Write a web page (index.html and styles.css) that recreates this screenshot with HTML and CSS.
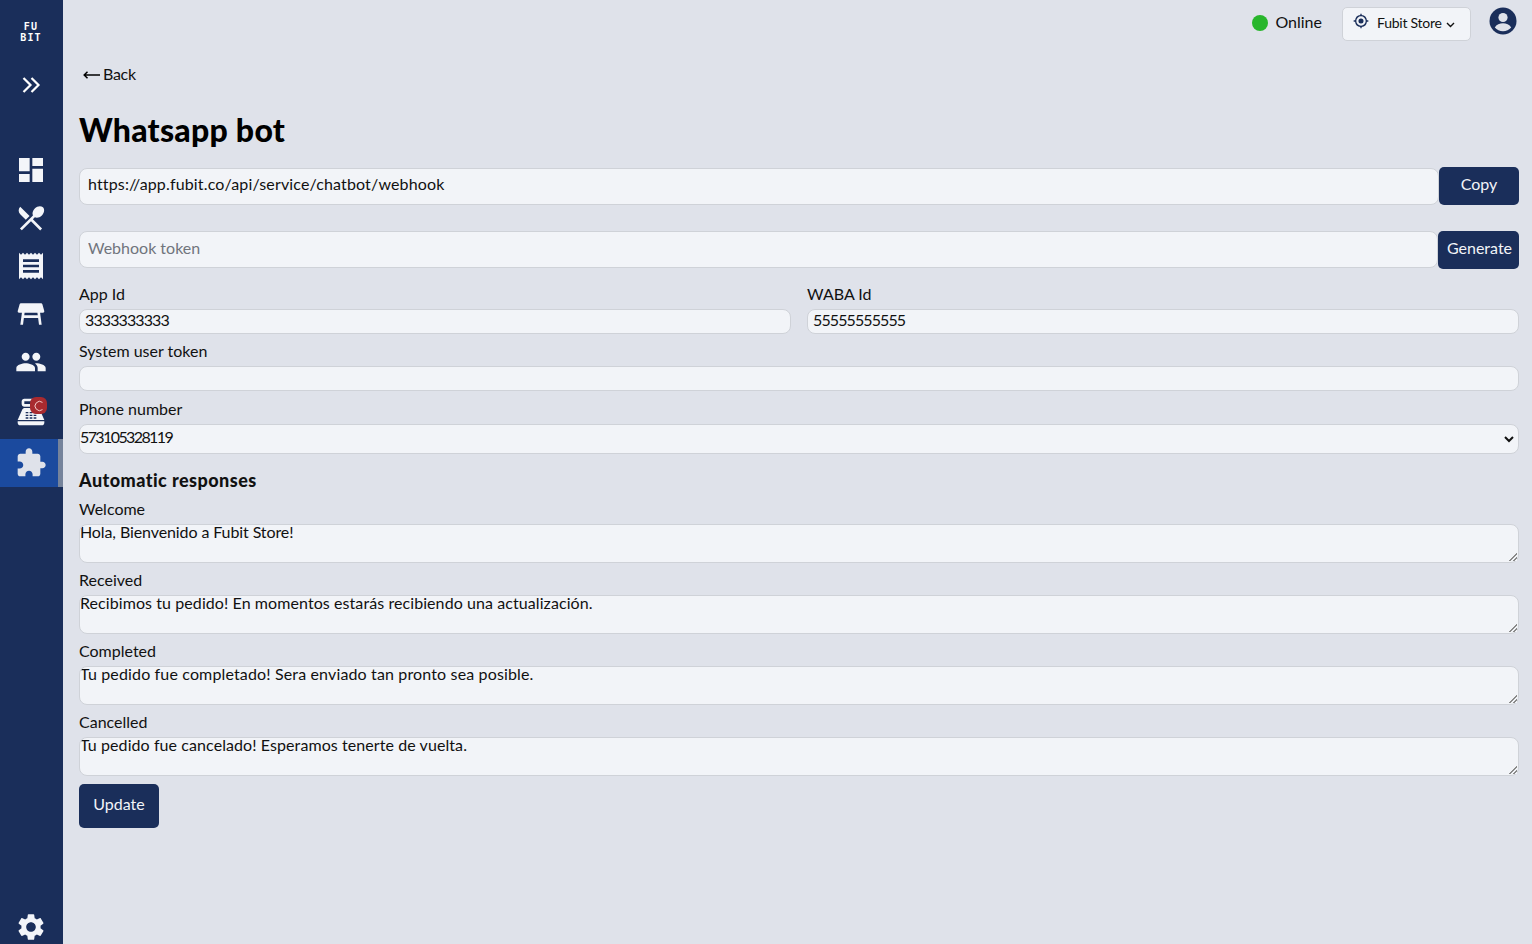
FILE: index.html
```html
<html>
    <head>
        <meta charset="utf-8">
        <title>Whatsapp bot</title>
        <link rel="stylesheet" href="styles.css">
    </head>
    <body>
        <div class="app">
            <nav class="sidebar">
                <div class="logo"><span>FU</span><span>BIT</span></div>
                <div class="expand">
                    <svg width="24" height="24" viewBox="0 0 24 24" fill="none" stroke="#fff" stroke-width="2.2"><path d="M4.5 5l7 7-7 7M12.5 5l7 7-7 7"/></svg>
                </div>
                <div class="menu">
                    <a class="item"><svg class="icon" viewBox="0 0 24 24"><path d="M3 13h8V3H3v10zm0 8h8v-6H3v6zm10 0h8V11h-8v10zm0-18v6h8V3h-8z"/></svg></a>
                    <a class="item"><svg class="icon" viewBox="0 0 24 24"><path d="M8.1 13.34l2.83-2.83L3.91 3.5c-1.56 1.56-1.56 4.09 0 5.66l4.19 4.18zm6.78-1.81c1.53.71 3.68.21 5.27-1.38 1.91-1.91 2.28-4.65.81-6.12-1.46-1.46-4.2-1.1-6.12.81-1.59 1.59-2.09 3.74-1.38 5.27L3.7 19.87l1.41 1.41L12 14.41l6.88 6.88 1.41-1.41L13.41 13l1.47-1.47z"/></svg></a>
                    <a class="item"><svg class="icon" viewBox="0 0 24 24"><path d="M18 17H6v-2h12v2zm0-4H6v-2h12v2zm0-4H6V7h12v2zM3 22l1.5-1.5L6 22l1.5-1.5L9 22l1.5-1.5L12 22l1.5-1.5L15 22l1.5-1.5L18 22l1.5-1.5L21 22V2l-1.5 1.5L18 2l-1.5 1.5L15 2l-1.5 1.5L12 2l-1.5 1.5L9 2 7.5 3.5 6 2 4.5 3.5 3 2v20z"/></svg></a>
                    <a class="item"><svg class="icon" viewBox="0 0 24 24"><path d="M21.96 9.73l-1.43-5C20.41 4.3 20.02 4 19.57 4H4.43c-.45 0-.84.3-.96.73l-1.43 5C1.86 10.36 2.34 11 3 11h2.2L4 20h2l.67-5h10.67l.66 5h2l-1.2-9H21c.66 0 1.14-.64.96-1.27zM6.93 13l.27-2h9.6l.27 2H6.93z"/></svg></a>
                    <a class="item"><svg class="icon" viewBox="0 0 24 24"><path d="M16 11c1.66 0 2.99-1.34 2.99-3S17.66 5 16 5c-1.66 0-3 1.34-3 3s1.34 3 3 3zm-8 0c1.66 0 2.99-1.34 2.99-3S9.66 5 8 5C6.34 5 5 6.34 5 8s1.34 3 3 3zm0 2c-2.33 0-7 1.17-7 3.5V19h14v-2.5c0-2.33-4.67-3.5-7-3.5zm8 0c-.29 0-.62.02-.97.05 1.16.84 1.97 1.97 1.97 3.45V19h6v-2.5c0-2.33-4.67-3.5-7-3.5z"/></svg></a>
                    <a class="item pos">
                        <svg class="icon" viewBox="0 0 24 24"><path fill-rule="evenodd" d="M17 2H7c-1.1 0-2 .9-2 2v2c0 1.1.9 2 2 2h10c1.1 0 2-.9 2-2V4c0-1.1-.9-2-2-2zm0 4H7V4h10v2zm3 16H4c-1.1 0-2-.9-2-2v-1h20v1c0 1.1-.9 2-2 2zm-1.47-11.81C18.21 9.47 17.49 9 16.7 9H7.3c-.79 0-1.51.47-1.83 1.19L2 18h20l-3.47-7.81zM8 12h2v1H8zm0 2h2v1H8zm0 2h2v1H8zm3-4h2v1h-2zm0 2h2v1h-2zm0 2h2v1h-2zm3-4h2v1h-2zm0 2h2v1h-2zm0 2h2v1h-2z"/></svg>
                        <span class="badge"><svg width="12" height="12" viewBox="0 0 12 12" fill="none" stroke="#f3c9c9" stroke-width="1"><path d="M9.5 2.4A4.6 4.6 0 1 0 9.5 9.6"/></svg></span>
                    </a>
                    <a class="item active"><svg class="icon" viewBox="0 0 24 24"><path d="M20.5 11H19V7c0-1.1-.9-2-2-2h-4V3.500C13 2.120 11.880 1 10.500 1S8 2.120 8 3.500V5H4c-1.100 0-1.990.9-1.990 2v3.800H3.500c1.490 0 2.700 1.210 2.700 2.700s-1.210 2.700-2.700 2.700H2V20c0 1.100.9 2 2 2h3.800v-1.500c0-1.490 1.210-2.700 2.700-2.700 1.490 0 2.700 1.210 2.700 2.700V22H17c1.100 0 2-.9 2-2v-4h1.500c1.380 0 2.500-1.120 2.500-2.500S21.880 11 20.500 11z"/></svg></a>
                </div>
                <a class="settings"><svg class="icon" viewBox="0 0 24 24"><path d="M19.14 12.94c.04-.3.06-.61.06-.94 0-.32-.02-.64-.07-.94l2.03-1.58c.18-.14.23-.41.12-.61l-1.92-3.32c-.12-.22-.37-.29-.59-.22l-2.39.96c-.5-.38-1.03-.7-1.62-.94l-.36-2.54c-.04-.24-.24-.41-.48-.41h-3.84c-.24 0-.43.17-.47.41l-.36 2.54c-.59.24-1.13.57-1.62.94l-2.39-.96c-.22-.08-.47 0-.59.22L2.74 8.87c-.12.21-.08.47.12.61l2.03 1.58c-.05.3-.09.63-.09.94s.02.64.07.94l-2.03 1.58c-.18.14-.23.41-.12.61l1.92 3.32c.12.22.37.29.59.22l2.39-.96c.5.38 1.03.7 1.62.94l.36 2.54c.05.24.24.41.48.41h3.84c.24 0 .44-.17.47-.41l.36-2.54c.59-.24 1.13-.56 1.62-.94l2.39.96c.22.08.47 0 .59-.22l1.92-3.32c.12-.22.07-.47-.12-.61l-2.01-1.58zM12 15.6c-1.98 0-3.6-1.62-3.6-3.6s1.62-3.6 3.6-3.6 3.6 1.62 3.6 3.6-1.62 3.6-3.6 3.6z"/></svg></a>
            </nav>

            <main class="main">
                <header class="topbar">
                    <span class="dot"></span>
                    <span class="status">Online</span>
                    <button class="store">
                        <svg class="target" width="16" height="16" viewBox="0 0 24 24" fill="#1a2e5a"><path d="M12 8.2a3.8 3.8 0 1 0 0 7.6 3.8 3.8 0 0 0 0-7.6zm8.9 2.8A9 9 0 0 0 13 3.1V1h-2v2.1A9 9 0 0 0 3.1 11H1v2h2.1a9 9 0 0 0 7.9 7.9V23h2v-2.1a9 9 0 0 0 7.9-7.9H23v-2h-2.1zM12 19a7 7 0 1 1 0-14 7 7 0 0 1 0 14z"/></svg>
                        <span class="store-name">Fubit Store</span>
                        <svg class="caret" width="9" height="6" viewBox="0 0 9 6" fill="none" stroke="#111" stroke-width="1.4"><path d="M1 1l3.5 3.5L8 1"/></svg>
                    </button>
                    <svg class="avatar" width="28" height="28" viewBox="0 0 28 28"><circle cx="14" cy="14" r="13.500" fill="#1a2e5a"/><circle cx="14" cy="10.500" r="4.600" fill="#dfe2ea"/><path d="M5.800 20.600c1.600-3 5-4.300 8.200-4.300s6.600 1.300 8.200 4.300c-2 2.300-5 3.700-8.200 3.700s-6.200-1.400-8.200-3.700z" fill="#dfe2ea"/></svg>
                </header>

                <a class="back">
                    <svg width="17" height="8" viewBox="0 0 17 8" fill="none" stroke="#000" stroke-width="1.500"><path d="M17 4H1.500M4.500 .8L1.200 4l3.300 3.200"/></svg>
                    Back
                </a>
                <h1>Whatsapp bot</h1>

                <div class="group first">
                    <input class="field tall url" value="https://app.fubit.co/api/service/chatbot/webhook">
                    <button class="btn copy">Copy</button>
                </div>
                <div class="group second">
                    <input class="field tall" placeholder="Webhook token">
                    <button class="btn generate">Generate</button>
                </div>

                <div class="cols">
                    <div>
                        <label>App Id</label>
                        <input class="field small digits" value="3333333333">
                    </div>
                    <div>
                        <label>WABA Id</label>
                        <input class="field small digits" value="55555555555">
                    </div>
                </div>

                <label>System user token</label>
                <input class="field small" value="">

                <label class="phone">Phone number</label>
                <select class="field pick"><option>573105328119</option></select>

                <h2>Automatic responses</h2>

                <label>Welcome</label>
                <textarea class="field area narrow">Hola, Bienvenido a Fubit Store!</textarea>
                <label>Received</label>
                <textarea class="field area">Recibimos tu pedido! En momentos estarás recibiendo una actualización.</textarea>
                <label>Completed</label>
                <textarea class="field area wide">Tu pedido fue completado! Sera enviado tan pronto sea posible.</textarea>
                <label>Cancelled</label>
                <textarea class="field area">Tu pedido fue cancelado! Esperamos tenerte de vuelta.</textarea>

                <button class="btn update">Update</button>
            </main>
        </div>
    </body>
</html>
```

FILE: styles.css
```css
* {
    box-sizing: border-box;
}

body {
    margin: 0;
    font-family: Lato, "Noto Sans", sans-serif;
    font-size: 16px;
    color: #111;
    background-color: #dfe2ea;
    overflow: hidden;
}

.app {
    display: flex;
    height: 944px;
}

/* Sidebar */
.sidebar {
    width: 63px;
    flex: none;
    display: flex;
    flex-direction: column;
    background-color: #1a2e5a;
}

.logo {
    height: 64px;
    display: flex;
    flex-direction: column;
    align-items: center;
    justify-content: center;
    padding-right: 1px;
    font-family: "DejaVu Sans Mono", monospace;
    font-size: 10px;
    font-weight: bold;
    line-height: 11px;
    letter-spacing: 1.2px;
    color: #fff;
}

.expand {
    height: 42px;
    display: flex;
    align-items: center;
    justify-content: center;
    padding-right: 2px;
}

.menu {
    margin-top: 40px;
}

.item {
    height: 48px;
    display: flex;
    align-items: center;
    justify-content: center;
    padding-right: 2px;
    position: relative;
}

.pos {
    padding-top: 3px;
}

.icon {
    width: 32px;
    height: 32px;
    fill: #f3f5f9;
}

.item.active {
    margin-top: 5px;
    background-color: #1b4a9e;
    border-right: 5px solid #75839b;
    padding: 0 0 0 4px;
}

.item.active .icon {
    fill: #dfe2ea;
}

.badge {
    position: absolute;
    top: 11px;
    left: 30px;
    width: 17px;
    height: 17px;
    border-radius: 6px;
    background-color: #a82a2f;
    display: flex;
    align-items: center;
    justify-content: center;
}

.settings {
    margin-top: auto;
    height: 34px;
    display: flex;
    align-items: center;
    justify-content: center;
    padding-right: 2px;
}

/* Main */
.main {
    flex: 1;
    min-width: 0;
    padding: 0 13px 0 16px;
}

.topbar {
    height: 45px;
    display: flex;
    align-items: center;
    justify-content: flex-end;
    padding-bottom: 3px;
}

.dot {
    width: 16px;
    height: 16px;
    border-radius: 50%;
    background-color: #28b62c;
    margin-right: 7px;
    margin-top: 4px;
}

.status {
    margin-right: 20px;
}

.store {
    width: 129px;
    height: 34px;
    margin-top: 6px;
    display: flex;
    align-items: center;
    padding: 0 0 0 10px;
    background-color: #f2f4f8;
    border: 1px solid #cfd2d8;
    border-radius: 5px;
    font-family: inherit;
    font-size: 14px;
    color: #111;
}

.target {
    margin-bottom: 6px;
}

.store-name {
    margin: 0 4px 3px 8px;
    letter-spacing: -0.25px;
}

.caret {
    margin-top: 1px;
}

.avatar {
    margin: 0 2px 0 18px;
}

.back {
    display: flex;
    align-items: center;
    gap: 3px;
    margin: 18px 0 0 4px;
    height: 20px;
    letter-spacing: -0.3px;
}

.back svg {
    margin-top: 4px;
}

h1 {
    margin: 26px 0 0;
    font-size: 32px;
    line-height: 42px;
    font-weight: 900;
    letter-spacing: 0.25px;
    color: #000;
}

h2 {
    margin: 14px 0 0;
    font-size: 18px;
    line-height: 24px;
    font-weight: 900;
    letter-spacing: 0.45px;
    color: #111;
}

label {
    display: block;
    line-height: 20px;
    margin-top: 7px;
    margin-bottom: 5px;
}

label.phone {
    margin-top: 8px;
}

.field {
    display: block;
    width: 100%;
    background-color: #f2f4f8;
    border: 1px solid #cfd2d8;
    border-radius: 8px;
    font-family: inherit;
    font-size: 16px;
    color: #111;
    outline: none;
}

.field::placeholder {
    color: #70757d;
}

.group {
    display: flex;
    align-items: flex-start;
}

.first {
    margin-top: 16px;
}

.second {
    margin-top: 26px;
}

.tall {
    flex: 1;
    height: 37px;
    padding: 0 8px 4px;
}

.first .tall {
    margin-top: 1px;
    padding-bottom: 6px;
}

.url {
    letter-spacing: 0.15px;
}

.btn {
    background-color: #1a2e5a;
    color: #f2f4f8;
    border: none;
    border-radius: 5px;
    font-family: inherit;
    font-size: 16px;
}

.copy {
    width: 80px;
    height: 38px;
    padding-bottom: 6px;
}

.generate {
    width: 81px;
    height: 38px;
    padding: 0 0 5px 2px;
}

.cols {
    display: grid;
    grid-template-columns: 1fr 1fr;
    gap: 16px;
    margin-top: 15px;
}

.cols label {
    margin-top: 0;
}

.small {
    height: 25px;
    padding: 0 5px 5px;
}

.digits {
    letter-spacing: -0.9px;
}

.pick {
    height: 30px;
    padding: 0 0 5px;
    letter-spacing: -1.6px;
    appearance: none;
    background-image: url("data:image/svg+xml,%3Csvg xmlns='http://www.w3.org/2000/svg' width='10' height='7' fill='none' stroke='%23111' stroke-width='2'%3E%3Cpath d='M1 1l4 4 4-4'/%3E%3C/svg%3E");
    background-repeat: no-repeat;
    background-position: right 4px center;
}

.area {
    height: 39px;
    padding: 0;
    line-height: 14px;
    resize: vertical;
    margin-bottom: 7px;
    letter-spacing: 0.08px;
}

.area::-webkit-resizer {
    background:
        linear-gradient(135deg, #f2f4f8 50%, transparent 50%) right 1px bottom 1px / 10px 10px no-repeat,
        repeating-linear-gradient(135deg, #8a8a8a 0 1px, #f2f4f8 1px 2.8px) right 1px bottom 1px / 10px 10px no-repeat;
}

.narrow {
    letter-spacing: -0.1px;
}

.wide {
    letter-spacing: 0.145px;
}

.update {
    display: block;
    width: 80px;
    height: 44px;
    margin-top: 8px;
    padding-bottom: 7px;
}
```
